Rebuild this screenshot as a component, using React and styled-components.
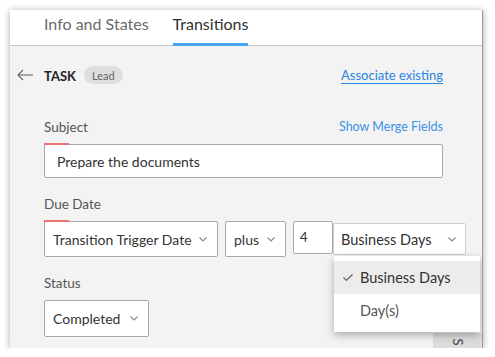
import React from 'react';
import styled, { createGlobalStyle } from 'styled-components';

const Global = createGlobalStyle`
  html, body {
    margin: 0;
    background: #ffffff;
    font-family: Lato, "Open Sans", "Liberation Sans", sans-serif;
  }
  body {
    padding: 10px 0 0 10px;
  }
`;

const Card = styled.div`
  position: relative;
  width: 472px;
  height: 338px;
  background: #f3f3f3;
  border-right: 1px solid #9a9a9a;
  box-shadow: 0 1px 7px rgba(0, 0, 0, 0.35);
  overflow: hidden;
  display: flex;
  flex-direction: column;
`;

const TabBar = styled.div`
  height: 35px;
  background: #fff;
  border-bottom: 1px solid #c9c9c9;
  display: flex;
  gap: 24px;
  padding-left: 34px;
`;

const Tab = styled.div`
  position: relative;
  display: flex;
  align-items: center;
  padding-bottom: 9px;
  font-size: 16px;
  color: ${(p) => (p.$active ? '#2f2f2f' : '#6b6b6b')};

  &::after {
    content: '';
    display: ${(p) => (p.$active ? 'block' : 'none')};
    position: absolute;
    left: 0;
    right: 0;
    bottom: -1px;
    height: 3px;
    background: #42a5f5;
  }
`;

const Body = styled.div`
  position: relative;
  padding: 19px 0 0 34px;
  width: 399px;
  display: flex;
  flex-direction: column;
  gap: 34px;
`;

const TitleRow = styled.div`
  display: flex;
  align-items: center;
  height: 20px;
  margin-left: -27px;
`;

const Back = styled.svg`
  width: 16px;
  height: 12px;
  margin-right: 11px;
`;

const TaskTitle = styled.span`
  font-size: 13px;
  font-weight: 700;
  color: #222;
  margin-top: 2px;
`;

const Badge = styled.span`
  margin-left: 8px;
  height: 18px;
  padding: 0 8px;
  border-radius: 9px;
  background: #dedede;
  color: #666;
  font-size: 11px;
  display: flex;
  align-items: center;
`;

const UnderLink = styled.a`
  margin-left: auto;
  color: #2a84dd;
  font-size: 13px;
  text-decoration: none;
  border-bottom: 1px solid #2a84dd;
  line-height: 15px;
  margin-top: 2px;
`;

const Fields = styled.div`
  display: flex;
  flex-direction: column;
  gap: 18px;
`;

const Field = styled.div`
  display: flex;
  flex-direction: column;
  gap: 9px;
`;

const LabelRow = styled.div`
  display: flex;
  align-items: center;
  justify-content: space-between;
  height: 16px;
`;

const Label = styled.span`
  font-size: 13.5px;
  color: #555;
`;

const MergeLink = styled.span`
  font-size: 12.5px;
  color: #3a93e6;
  margin-top: -2px;
`;

const Box = styled.div`
  position: relative;
  box-sizing: border-box;
  height: ${(p) => p.$h || 36}px;
  width: ${(p) => (p.$w ? `${p.$w}px` : 'auto')};
  flex-shrink: 0;
  background: #fff;
  border: 1px solid ${(p) => (p.$open ? '#cfcfcf' : '#a8a8a8')};
  border-radius: 2px;
  display: flex;
  align-items: center;
  padding: 0 ${(p) => p.$pr ?? 8}px 0 ${(p) => p.$pl ?? 8}px;
  font-size: ${(p) => p.$fs || 14}px;
  color: #333;

  &::before {
    content: '';
    display: ${(p) => (p.$required ? 'block' : 'none')};
    position: absolute;
    left: -1px;
    top: -2px;
    width: 25px;
    height: 2px;
    background: #f07370;
  }
`;

const SelectText = styled.span`
  flex: 1;
  white-space: nowrap;
`;

const Chevron = () => (
  <svg width="8" height="5" viewBox="0 0 8 5" style={{ flexShrink: 0 }}>
    <polyline points="0.5,0.5 4,4 7.5,0.5" fill="none" stroke="#888" strokeWidth="1.1" />
  </svg>
);

const DateRow = styled.div`
  display: flex;
  align-items: flex-start;
  gap: 7px;
  width: 430px;
`;

const NumBox = styled(Box)`
  align-items: flex-start;
  padding-top: 7px;
  font-size: 13px;
  margin-right: -7px;
`;

const DropWrap = styled.div`
  position: relative;
  margin-top: 2px;
`;

const Menu = styled.div`
  position: absolute;
  z-index: 2;
  top: 33px;
  left: 1px;
  width: 146px;
  padding: 5px 0;
  background: #fff;
  box-shadow: 0 3px 8px rgba(0, 0, 0, 0.3);
`;

const MenuItem = styled.div`
  position: relative;
  height: 33px;
  display: flex;
  align-items: center;
  padding-left: 26px;
  font-size: 14.5px;
  color: ${(p) => (p.$selected ? '#333' : '#555')};
  background: ${(p) => (p.$selected ? '#ececec' : 'transparent')};
`;

const Check = styled.svg`
  position: absolute;
  left: 9px;
  top: 13px;
`;

const SideTab = styled.div`
  position: absolute;
  left: 423px;
  right: 0;
  top: 323px;
  bottom: 0;
  background: #dcdcdc;
  display: flex;
  justify-content: center;
  padding-top: 3px;
`;

const SideText = styled.span`
  display: block;
  font-size: 13px;
  line-height: 13px;
  color: #444;
  transform: rotate(90deg);
`;

export default function App() {
  return (
    <>
      <Global />
      <Card>
        <TabBar>
          <Tab>Info and States</Tab>
          <Tab $active>Transitions</Tab>
        </TabBar>
        <Body>
          <TitleRow>
            <Back viewBox="0 0 16 12">
              <polyline points="6,1 1,6 6,11" fill="none" stroke="#666" strokeWidth="1.1" />
              <line x1="1" y1="6" x2="16" y2="6" stroke="#666" strokeWidth="1.1" />
            </Back>
            <TaskTitle>TASK</TaskTitle>
            <Badge>Lead</Badge>
            <UnderLink>Associate existing</UnderLink>
          </TitleRow>
          <Fields>
            <Field>
              <LabelRow>
                <Label>Subject</Label>
                <MergeLink>Show Merge Fields</MergeLink>
              </LabelRow>
              <Box $h={34} $pl={12} $required>Prepare the documents</Box>
            </Field>
            <Field>
              <LabelRow>
                <Label>Due Date</Label>
              </LabelRow>
              <DateRow>
                <Box $w={174} $required $pr={10}>
                  <SelectText>Transition Trigger Date</SelectText>
                  <Chevron />
                </Box>
                <Box $w={61} $pr={10}>
                  <SelectText>plus</SelectText>
                  <Chevron />
                </Box>
                <NumBox $w={40} $h={33} $pl={6}>4</NumBox>
                <DropWrap>
                  <Box $w={133} $h={32} $open $pl={7} $pr={9} $fs={14.5}>
                    <SelectText>Business Days</SelectText>
                    <Chevron />
                  </Box>
                  <Menu>
                    <MenuItem $selected>
                      <Check width="10" height="7" viewBox="0 0 10 7">
                        <polyline points="0.5,3.5 3.5,6.3 9.5,0.5" fill="none" stroke="#555" strokeWidth="1.1" />
                      </Check>
                      Business Days
                    </MenuItem>
                    <MenuItem>Day(s)</MenuItem>
                  </Menu>
                </DropWrap>
              </DateRow>
            </Field>
            <Field>
              <LabelRow>
                <Label>Status</Label>
              </LabelRow>
              <Box $w={105} $h={37} $pr={10}>
                <SelectText>Completed</SelectText>
                <Chevron />
              </Box>
            </Field>
          </Fields>
        </Body>
        <SideTab>
          <SideText>S</SideText>
        </SideTab>
      </Card>
    </>
  );
}
